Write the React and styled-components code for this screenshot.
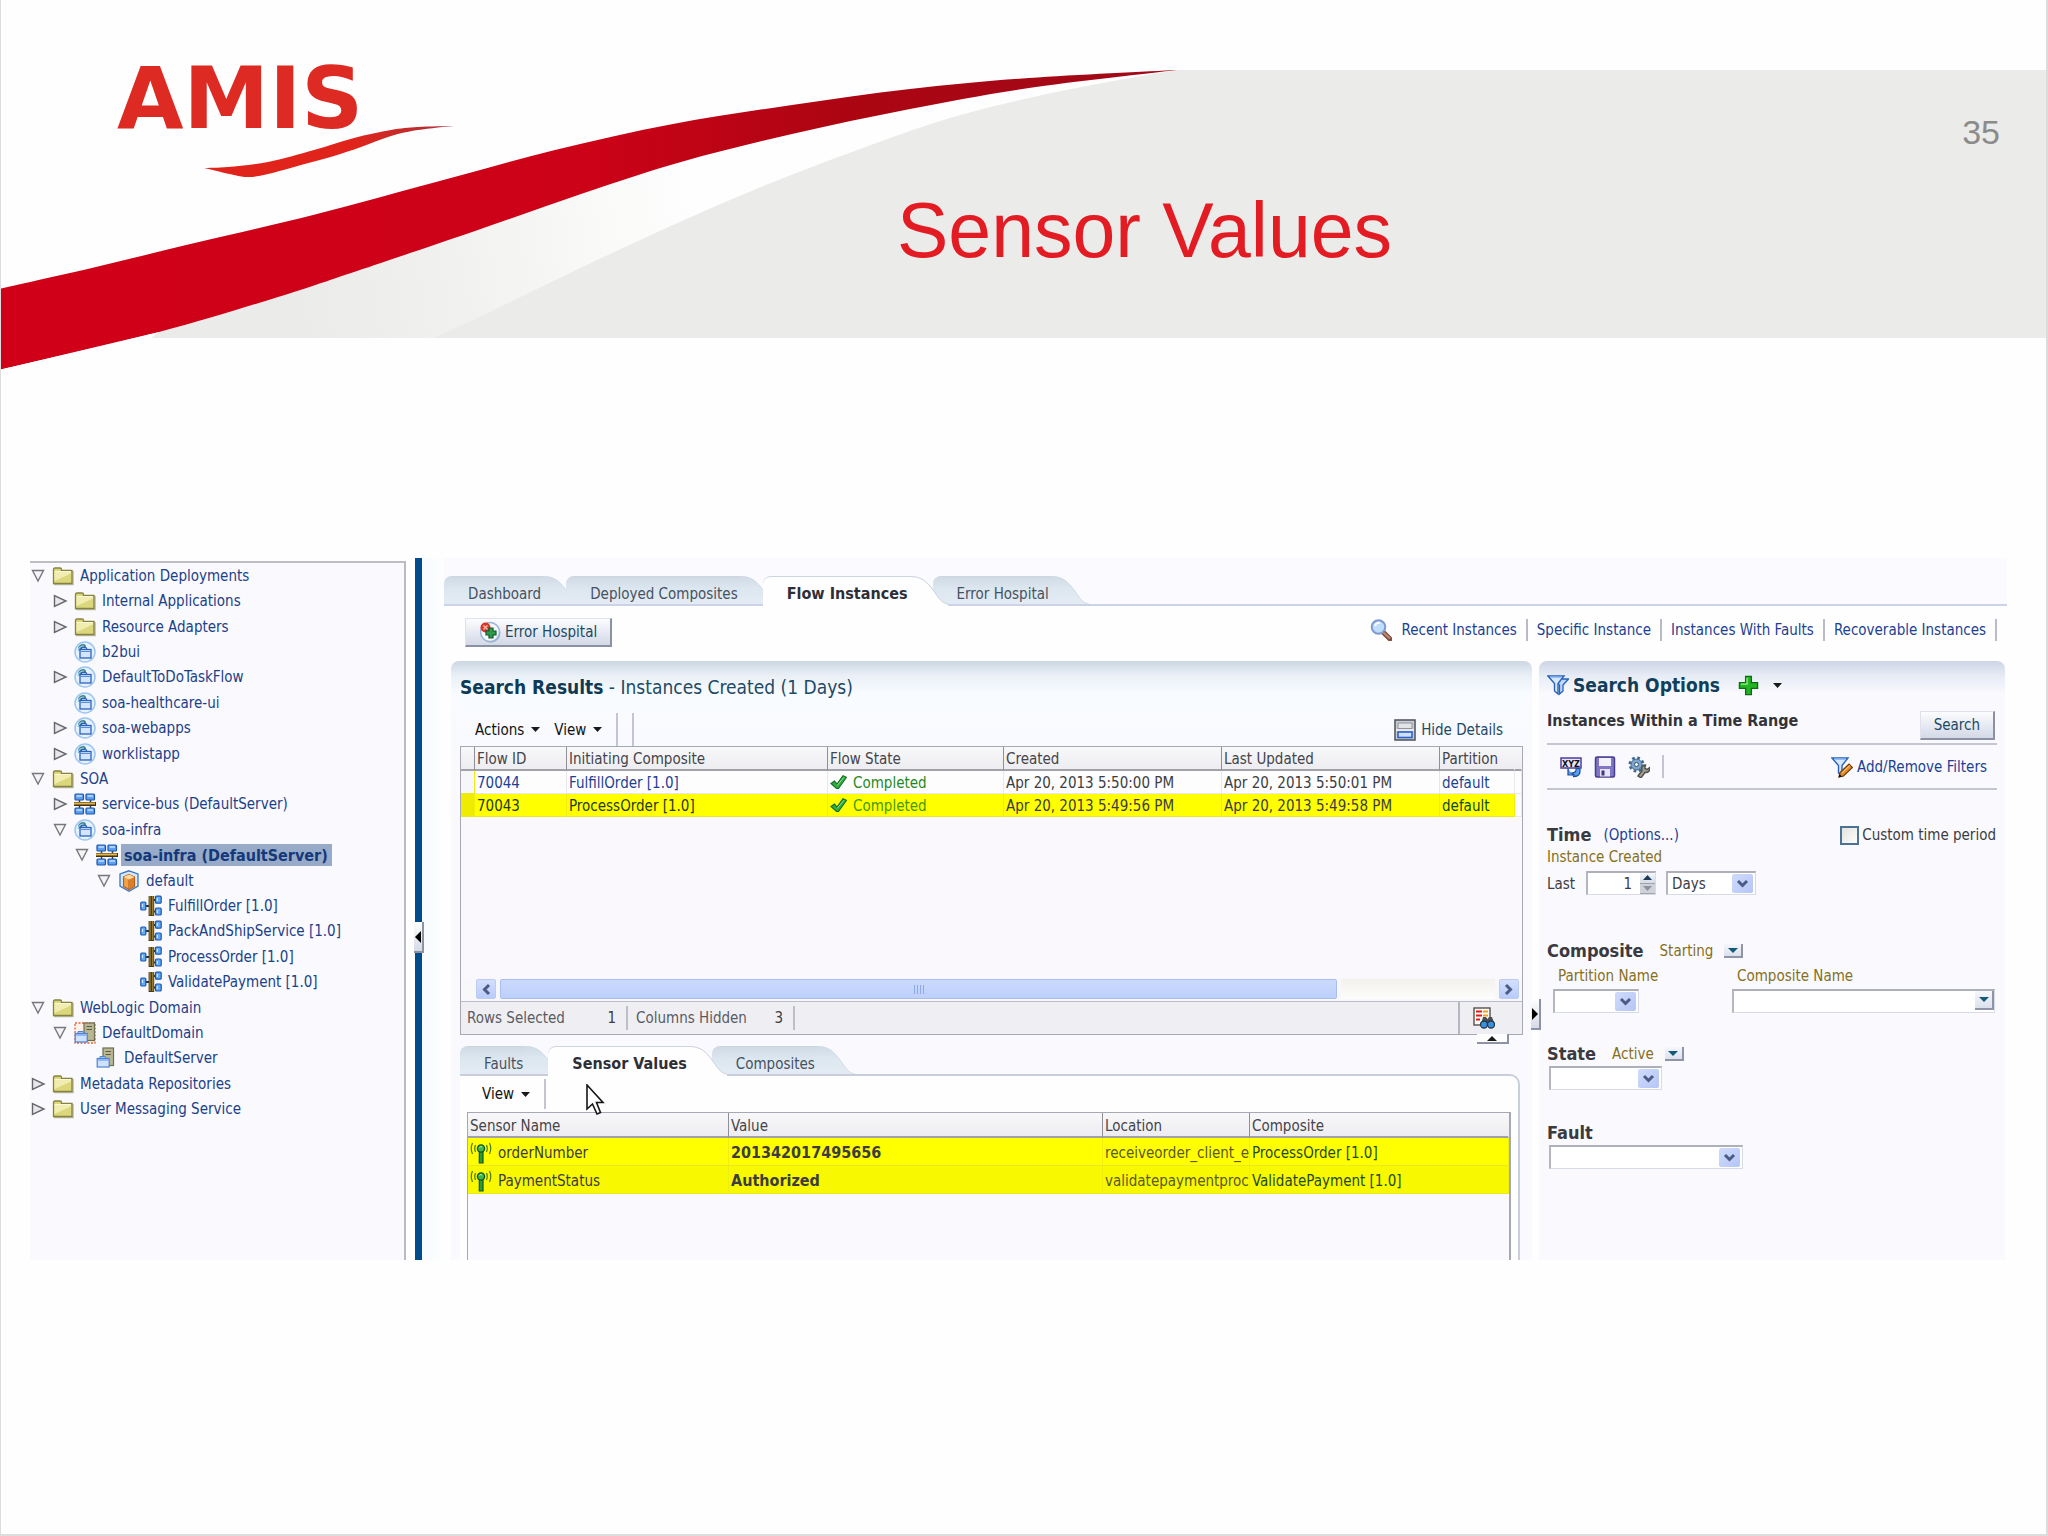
import React from "react";
import styled, { createGlobalStyle, css } from "styled-components";

/* ---------- tokens ---------- */

const ui = '"DejaVu Sans Condensed", "DejaVu Sans", "Noto Sans", sans-serif';
const c = {
  link: "#1c3f94",
  tree: "#1b4189",
  teal: "#123f5a",
  ink: "#3c3c42",
  label: "#85701c",
  line: "#c4c6d0",
  frame: "#a6a8b2",
  panel: "#f9f9fe",
  yellow: "#ffff00",
};

const GlobalStyle = createGlobalStyle`
  *, *::before, *::after { box-sizing: border-box; }
  body { margin: 0; background: #fefefe; }
  button, input, select { font: inherit; color: inherit; margin: 0; }
  a { text-decoration: none; }
`;

/* ---------- slide ---------- */

const Slide = styled.div`
  min-height: 100vh;
  display: flex;
  flex-direction: column;
  border: solid #dcdcdc;
  border-width: 0 2px 2px 1px;
  background: #fefefe;
  font: 15px/20px ${ui};
  color: ${c.ink};
`;

const Header = styled.header`
  position: relative;
  padding-top: 70px;
  height: 370px;
  overflow: hidden;
`;

const Band = styled.div`
  height: 268px;
  background: #ebebe9;
  display: flex;
  flex-direction: column;
  font-family: "Liberation Sans", Arial, sans-serif;
`;

const PageNumber = styled.div`
  padding: 40px 46px 0 0;
  text-align: right;
  font-size: 34px;
  line-height: 44px;
  color: #8b8b8b;
`;

const Title = styled.h1`
  position: relative;
  z-index: 1;
  margin: 32px 0 0;
  padding-left: 242px;
  text-align: center;
  font-size: 77px;
  font-weight: 400;
  line-height: 88px;
  color: #e31b23;
`;

const Art = styled.svg`
  position: absolute;
  left: 0;
  top: 0;
`;

const Console = styled.main`
  display: flex;
  margin: 188px 39px 0 29px;
`;

/* ---------- navigation tree ---------- */

const Sidebar = styled.nav`
  width: 376px;
  margin-top: 3px;
  border-top: 2px solid #bdbec4;
  border-right: 2px solid #b9bac2;
  background: ${c.panel};
`;

const Tree = styled.ul`
  height: 559px;
  margin: 0;
  padding: 0;
  list-style: none;
  display: grid;
  grid-auto-rows: 1fr;
`;

const TreeItem = styled.li`
  display: flex;
  align-items: center;
  padding-left: ${(p) => p.$level * 22}px;
  white-space: nowrap;
`;

const Twisty = styled.span`
  width: 22px;
  height: 20px;
  display: flex;
`;

const TreeLink = styled.a`
  display: flex;
  align-items: center;
  gap: 3px;
  color: ${c.tree};
`;

const TreeLabel = styled.span`
  padding: 1px 4px 0 3px;
  line-height: 21px;
  ${(p) =>
    p.$selected &&
    css`
      font-size: 16px;
      font-weight: 700;
      color: #14397b;
      background: #97abc9;
    `}
`;

const Splitter = styled.div`
  position: relative;
  width: 7px;
  margin-left: 9px;
  background: #004b8c;
`;

const Handle = styled.button`
  position: absolute;
  z-index: 2;
  display: flex;
  align-items: center;
  justify-content: center;
  padding: 0;
  border: solid #8d93a5;
  border-width: 0 2px 2px 0;
  background: linear-gradient(#ffffff, #d5dae6);
`;

const SplitHandle = styled(Handle)`
  left: -1px;
  top: 364px;
  width: 10px;
  height: 31px;
`;

const OptionsHandle = styled(Handle)`
  right: -9px;
  top: 338px;
  width: 10px;
  height: 31px;
`;

const DetailsHandle = styled(Handle)`
  right: 13px;
  top: 100%;
  width: 32px;
  height: 10px;
  background: #fdfdfe;
`;

/* ---------- tabs ---------- */

const Content = styled.section`
  flex: 1;
  min-width: 0;
  padding-left: 22px;
  background: linear-gradient(to right, #f6fbfe, #fefefe 24px);
`;

const TabStrip = styled.div`
  display: flex;
  height: ${(p) => (p.$main ? 48 : 28)}px;
  padding-top: ${(p) => (p.$main ? 18 : 0)}px;
  ${(p) =>
    p.$main &&
    css`
      background: #fafaff;
      border-bottom: 2px solid #ccd2e8;
    `}
`;

const TabButton = styled.button`
  position: relative;
  z-index: ${(p) => (p.$active ? 1 : 0)};
  display: flex;
  height: ${(p) => (p.$active ? 30 : 28)}px;
  padding: 0;
  border: 0;
  background: none;
  color: ${(p) => (p.$active ? "#2e2e36" : "#45525f")};
  font-weight: ${(p) => (p.$active ? 700 : 400)};
  font-size: ${(p) => (p.$active ? 16 : 15)}px;
  white-space: nowrap;
`;

const TabText = styled.span`
  height: 100%;
  padding: 7px 2px 0 24px;
  line-height: 20px;
  border-top: 1px solid #cdd5df;
  border-top-left-radius: 8px;
  background: ${(p) => (p.$active ? "#fefefe" : "linear-gradient(#d0dae5, #dce7f0 12px, #e4ebf4)")};
`;

const TabEdge = styled.svg`
  display: block;
  margin-right: -15px;
`;

function Tab({ active, children }) {
  return (
    <TabButton type="button" role="tab" aria-selected={!!active} $active={active}>
      <TabText $active={active}>{children}</TabText>
      <TabEdge width="38" height={active ? 30 : 28} aria-hidden="true">
        <defs>
          <linearGradient id="tabfill" gradientUnits="userSpaceOnUse" x1="0" y1="0" x2="0" y2="28">
            <stop offset="0" stopColor="#d0dae5" />
            <stop offset=".43" stopColor="#dce7f0" />
            <stop offset="1" stopColor="#e4ebf4" />
          </linearGradient>
        </defs>
        <path
          d="M0 0C12 0 17 6 23 14S31 27 38 28V30H0Z"
          fill={active ? "#fefefe" : "url(#tabfill)"}
        />
        <path d="M0 .5C12 .5 17 6 23 14S31 27 38 28" fill="none" stroke={active ? "#c9d0dd" : "#d3dbe5"} />
      </TabEdge>
    </TabButton>
  );
}

/* ---------- buttons, links ---------- */

const PushButton = styled.button`
  display: flex;
  align-items: center;
  justify-content: center;
  gap: 4px;
  height: 29px;
  padding: 0 13px;
  border: solid;
  border-width: 1px 2px 2px 1px;
  border-color: #dfe2ea #8b91a3 #8b91a3 #dfe2ea;
  background: linear-gradient(#fcfdfe, #dfe3ee 70%, #d3d9e6);
  color: #1c4a63;
  white-space: nowrap;
`;

const MenuButton = styled.button`
  display: flex;
  align-items: center;
  gap: 7px;
  padding: 0;
  border: 0;
  background: none;
  color: #111;
`;

const IconButton = styled.button`
  display: flex;
  padding: 0;
  border: 0;
  background: none;
`;

const TextLink = styled.a`
  display: flex;
  align-items: center;
  gap: ${(p) => p.$gap || 0}px;
  color: ${(p) => p.$color || c.link};
  white-space: nowrap;
`;

const Toolbar = styled.div`
  display: flex;
  justify-content: space-between;
  align-items: flex-start;
  height: 55px;
  padding: 12px 10px 0 21px;
`;

const QuickLinks = styled.nav`
  display: flex;
  align-items: center;
  padding-top: 1px;
`;

const QuickLink = styled(TextLink)`
  height: 22px;
  padding: 0 9px;
  border-right: 2px solid #b9bcc6;
`;

const Divider = styled.span`
  width: 2px;
  height: ${(p) => p.$h}px;
  background: #c3c5d2;
`;

/* ---------- results panel ---------- */

const Columns = styled.div`
  display: flex;
  gap: 7px;
  padding: 0 2px 0 7px;
`;

const Results = styled.section`
  position: relative;
  flex: 1;
  min-width: 0;
  padding: 0 9px;
  border-radius: 8px 8px 0 0;
  background: linear-gradient(#ccd7e4, #e8eff6 14px, #f8fbff 32px, ${c.panel} 100px);
`;

const ResultsTitle = styled.h2`
  margin: 0;
  font-size: 19px;
  font-weight: 400;
  line-height: 52px;
  color: #1d4a66;
  strong {
    color: #0e3a56;
  }
`;

const MenuBar = styled.div`
  display: flex;
  align-items: center;
  height: ${(p) => (p.$detail ? 36 : 33)}px;
  padding: 0 20px 0 15px;
  gap: 14px;
`;

const Push = styled.div`
  flex: 1;
`;

const Frame = styled.div`
  position: relative;
  border: 1px solid ${c.frame};
`;

const TableArea = styled.div`
  height: 231px;
  background: #faf8fd;
`;

const Grid = styled.table`
  width: 100%;
  table-layout: fixed;
  border-collapse: separate;
  border-spacing: 0;
`;

const Th = styled.th`
  height: ${(p) => p.$h || 24}px;
  padding: 2px 0 0 2px;
  text-align: left;
  font-weight: 400;
  white-space: nowrap;
  color: #44444a;
  background: linear-gradient(#f8f8fa, #ededf1);
  border-right: 1px solid ${(p) => (p.$last ? "transparent" : "#8f9097")};
  border-bottom: 2px solid #a1a2a9;
`;

const Td = styled.td`
  height: ${(p) => p.$h || 23}px;
  padding: 2px 0 0 2px;
  overflow: hidden;
  white-space: nowrap;
  color: ${(p) => p.$color || "inherit"};
  font-weight: ${(p) => (p.$bold ? 700 : 400)};
  font-size: ${(p) => (p.$bold ? 16 : 15)}px;
  background: ${(p) => (p.$bg ? p.$bg : "#fdfdfe")};
  border-right: 1px solid ${(p) => (p.$bg ? "#eeee10" : "#e8e8ec")};
  border-bottom: 1px solid ${(p) => (p.$bg ? "#e9e920" : "#e8e8ec")};
`;

const Inline = styled.span`
  display: flex;
  align-items: center;
  gap: ${(p) => p.$gap || 6}px;
`;

const ScrollRow = styled.div`
  display: grid;
  grid-template-columns: 20px 843fr 155fr 20px;
  gap: 4px;
  height: 24px;
  padding: 1px 3px 2px 15px;
  background: #f8f8fb;
  border-bottom: 1px solid #b9bccb;
`;

const ScrollTrack = styled.div`
  background: linear-gradient(#f2f1ee, #fdfdfb);
`;

const ScrollThumb = styled.div`
  display: flex;
  align-items: center;
  justify-content: center;
  border: 1px solid #a9bef0;
  border-radius: 2px;
  background: linear-gradient(#cbd9fd, #bdd0fb);
`;

const ScrollButton = styled.button`
  display: flex;
  align-items: center;
  justify-content: center;
  padding: 0;
  border: 1px solid #bccbf2;
  border-radius: 2px;
  background: linear-gradient(#d3dffd, #b9cbfa);
`;

const StatusBar = styled.dl`
  display: flex;
  align-items: center;
  height: 32px;
  margin: 0;
  padding-left: 6px;
  background: #efeff3;
  color: #5a5b62;
`;

const Stat = styled.div`
  display: flex;
  justify-content: space-between;
  width: ${(p) => p.$w}px;
  height: 24px;
  margin-right: 8px;
  padding: 2px 10px 0 0;
  border-right: 2px solid #bcbec8;
  dd {
    margin: 0;
    color: ${c.ink};
  }
`;

const StatusTool = styled.div`
  display: flex;
  align-items: center;
  width: 64px;
  height: 100%;
  padding-left: 13px;
  border-left: 2px solid #b4b6c1;
`;

/* ---------- details panel ---------- */

const Details = styled.div`
  margin-top: 11px;
`;

const DetailBody = styled.div`
  position: relative;
  margin-right: 3px;
  padding: 0 7px;
  border: solid #c9cedb;
  border-width: 2px 2px 0 0;
  border-top-right-radius: 10px;
  background: #fefefe;
`;

const DetailFrame = styled(Frame)`
  min-height: 148px;
  border-width: 1px 2px 0 1px;
  background: #faf9fe;
`;

const Pointer = styled.svg`
  position: absolute;
  left: 126px;
  top: 8px;
`;

/* ---------- search options ---------- */

const Options = styled.aside`
  width: 466px;
  padding: 8px 8px 0;
  border-radius: 8px 8px 0 0;
  background: linear-gradient(#ccd5e6, #e6ebf5 14px, ${c.panel} 32px);
`;

const OptionsHead = styled.div`
  display: flex;
  align-items: center;
  height: 32px;
  gap: 4px;
  h2 {
    margin: 0 14px 0 0;
    font-size: 19px;
    color: #0f3f5b;
  }
  ${MenuButton} {
    gap: 14px;
  }
`;

const Criteria = styled.div`
  display: flex;
  justify-content: space-between;
  align-items: flex-start;
  height: 44px;
  padding: 10px 2px 0 0;
  border-bottom: 2px solid ${c.line};
  h3 {
    margin: 0;
    font-size: 16px;
    line-height: 20px;
    color: #33333a;
  }
`;

const ToolRow = styled.div`
  display: flex;
  align-items: center;
  height: 45px;
  gap: 12px;
  padding: 0 10px 0 13px;
  border-bottom: 2px solid ${c.line};
`;

const Field = styled.section`
  margin-top: ${(p) => p.$top}px;
`;

const FieldHead = styled.div`
  display: flex;
  align-items: center;
  height: 22px;
  gap: ${(p) => p.$gap || 16}px;
  h3 {
    margin: 0;
    font-size: 18px;
    line-height: 22px;
    color: #3a3a40;
  }
`;

const Note = styled.div`
  padding-top: 1px;
  color: ${c.label};
`;

const Picked = styled.span`
  display: flex;
  align-items: center;
  gap: 11px;
  color: ${c.label};
`;

const CheckLabel = styled.label`
  display: flex;
  align-items: center;
  gap: 3px;
  margin-left: auto;
  padding-right: 1px;
  white-space: nowrap;
`;

const Check = styled.input`
  appearance: none;
  width: 19px;
  height: 19px;
  margin: 0;
  border: 2px solid #4b7396;
  background: linear-gradient(135deg, #e2e2de, #fdfdfb);
`;

const Inputs = styled.div`
  display: flex;
  margin-top: ${(p) => p.$top || 0}px;
  padding-left: ${(p) => p.$indent || 0}px;
`;

const LastLabel = styled.label`
  width: 39px;
  line-height: 26px;
`;

const Box = styled.span`
  display: grid;
  grid-template-columns: 1fr auto;
  width: ${(p) => p.$w}px;
  height: 24px;
  border: solid;
  border-width: 2px 1px 1px 2px;
  border-color: #adafb9 #d6dbe6 #d6dbe6 #b5b7c0;
  background: #fff;
`;

const NativeSelect = styled.select`
  grid-area: 1 / 1 / 2 / 3;
  appearance: none;
  width: 100%;
  height: 100%;
  padding: 1px 24px 0 4px;
  border: 0;
  background: transparent;
`;

const SelectArrow = styled.span`
  grid-area: 1 / 2 / 2 / 3;
  pointer-events: none;
  display: flex;
  align-items: center;
  justify-content: center;
  width: 21px;
  margin: 1px 2px 1px 0;
  border-radius: 2px;
  background: linear-gradient(135deg, #d0dbfb, #b5c5f6);
`;

const TextBox = styled.input`
  width: 100%;
  min-width: 0;
  padding: 1px 8px 0;
  border: 0;
  background: transparent;
  text-align: ${(p) => p.$align || "left"};
`;

const Spinner = styled.span`
  display: grid;
  grid-template-rows: 1fr 1fr;
  width: 15px;
`;

const SpinButton = styled.button`
  display: flex;
  align-items: center;
  justify-content: center;
  padding: 0;
  border: 0;
  border-bottom: 1px solid #9fa4b0;
  background: ${(p) => (p.disabled ? "#cfd2d9" : "linear-gradient(#f5f7fa, #d5dbe5)")};
`;

const DropButton = styled.button`
  display: flex;
  align-items: center;
  justify-content: center;
  width: 19px;
  height: ${(p) => p.$h || 14}px;
  padding: 0;
  border: solid #8f95a7;
  border-width: 0 2px 2px 0;
  background: linear-gradient(#f5f7fb, #dbe1ec);
`;

const FieldLabel = styled.label`
  display: block;
  width: ${(p) => p.$w}px;
  padding-left: 5px;
  color: ${c.label};
  white-space: nowrap;
`;

/* ---------- drawings ---------- */

const Svg = ({ s = 22, children }) => (
  <svg width={s} height={s} viewBox="0 0 22 22" fill="none" aria-hidden="true">
    {children}
  </svg>
);

const Caret = ({ w = 9, up, left, right, fill = "#1a1a1a" }) => {
  const d = up ? "M0 5L5 0L10 5Z" : "M0 0H10L5 5Z";
  if (left || right) {
    return (
      <svg width="6" height="12" viewBox="0 0 6 12" aria-hidden="true">
        <path d={left ? "M6 0V12L0 6Z" : "M0 0V12L6 6Z"} fill="#000" />
      </svg>
    );
  }
  return (
    <svg width={w} height={Math.round(w / 2)} viewBox="0 0 10 5" preserveAspectRatio="none" aria-hidden="true">
      <path d={d} fill={fill} />
    </svg>
  );
};

const Chevron = ({ turn = 0 }) => (
  <svg width="13" height="13" viewBox="0 0 13 13" aria-hidden="true">
    <path d="M2 4L6.500 8.500L11 4" transform={`rotate(${turn} 6.5 6.5)`} fill="none" stroke="#4a5b84" strokeWidth="3" />
  </svg>
);

const Twist = ({ open }) => (
  <svg width="16" height="20" viewBox="0 0 16 20" aria-hidden="true">
    {open ? (
      <path d="M2.500 4.500H13.500L8 15Z" fill="#f4f4f4" stroke="#77777c" strokeWidth="1.400" />
    ) : (
      <path d="M2.500 4.500V15.500L14 10Z" fill="#e8e8ea" stroke="#66666b" strokeWidth="1.400" />
    )}
  </svg>
);

const Folder = () => (
  <Svg>
    <path d="M2 19.500H21V6" stroke="#8f8f70" strokeWidth="1.500" opacity=".6" />
    <path d="M1.500 4.500Q1.500 3 3 3H8Q9.500 3 9.500 4.500V5.500H20V18.500H1.500Z" fill="#dcd77c" stroke="#86823f" strokeWidth="1.300" />
    <path d="M2.500 7H19V8.500L2.500 16Z" fill="#f1edb0" />
    <path d="M2.500 6.500H19" stroke="#fbf9d4" />
  </Svg>
);

const AppIcon = () => (
  <Svg>
    <circle cx="11" cy="11" r="10" fill="#e6f2fe" stroke="#9cc6f2" strokeWidth="1.500" />
    <path d="M4 10Q3 4 9 3Q12 3 12 6" fill="#3f7f86" />
    <path d="M4 10Q5 5 10 5" stroke="#9fd0ee" strokeWidth="1.200" />
    <path d="M7.500 8.500V6.500H12L13 8.500" fill="#bcd6fb" stroke="#2d62b8" strokeWidth="1.200" />
    <rect x="6" y="8.500" width="11" height="8.500" fill="#d3e5ff" stroke="#2d62b8" strokeWidth="1.300" />
    <path d="M6.500 10.500H16.500" stroke="#5b8fe0" />
  </Svg>
);

const BusIcon = () => (
  <Svg>
    <path d="M5.500 6V17M16.500 6V17" stroke="#3c3c3c" strokeWidth="1.500" />
    {[[1, 1], [12, 1], [1, 15], [12, 15]].map(([x, y]) => (
      <rect key={`${x}${y}`} x={x} y={y} width="8.500" height="6" rx="1" fill="#5d9ff0" stroke="#1c56ad" strokeWidth="1.200" />
    ))}
    <path d="M2.500 3H8M13.500 3H19M2.500 17H8M13.500 17H19" stroke="#c5e0ff" strokeWidth="1.500" />
    <path d="M0 11H22" stroke="#3f3312" strokeWidth="4" />
    <path d="M0 10.500H21" stroke="#e5b64a" strokeWidth="2" />
  </Svg>
);

const CubeIcon = () => (
  <Svg>
    <path d="M11 .8L20 4V16L11 21.200L2 16V4Z" fill="#d8e9fc" stroke="#3a74c4" strokeWidth="1.300" />
    <path d="M11 4.500L16.500 7V16.500L11 19.500L5.500 16.500V7Z" fill="#f2a04a" stroke="#b5611a" strokeWidth="1.200" />
    <path d="M5.500 7L11 9.500L16.500 7L11 4.500Z" fill="#ffd9a4" />
    <path d="M11 9.500V19" stroke="#b5611a" />
    <path d="M11.500 9.500L16 7.500V16L11.500 19Z" fill="#dd7d28" />
  </Svg>
);

const CompositeIcon = () => (
  <Svg>
    <path d="M5 11H9M13 5H16M13 16.500H16" stroke="#2d2d2d" strokeWidth="2" />
    <rect x=".8" y="7" width="5" height="8" rx="1" fill="#63aaf2" stroke="#1c56ad" strokeWidth="1.200" />
    <path d="M10 1V21M12.800 1V21" stroke="#4b3c14" strokeWidth="2.800" />
    <path d="M10 1V20M12.800 1V20" stroke="#b99741" strokeWidth="1" />
    <rect x="15.500" y="1.200" width="5.700" height="7" rx="1" fill="#63aaf2" stroke="#1c56ad" strokeWidth="1.200" />
    <rect x="15.500" y="13" width="5.700" height="7" rx="1" fill="#63aaf2" stroke="#1c56ad" strokeWidth="1.200" />
    <path d="M2.500 9V12M17.300 3V6M17.300 15V18" stroke="#d2e8ff" strokeWidth="1.200" />
  </Svg>
);

const ServerIcon = ({ domain }) => (
  <Svg>
    {domain && <rect x="1" y="1" width="20" height="20" fill="#fdf1ea" stroke="#e2663a" strokeWidth="1.300" strokeDasharray="2 1.500" />}
    <rect x={domain ? 10 : 7} y="1" width="10.500" height="17.500" fill="#b9b694" stroke="#6f6d50" strokeWidth="1.200" />
    <path d={domain ? "M12.500 4.500H18M12.500 7.500H18" : "M9.500 4.500H15M9.500 7.500H15"} stroke="#5f5d43" strokeWidth="1.200" />
    <path d="M4 11.500V9.500H9L10 11.500" fill="#a9cbf8" stroke="#4c83d2" />
    <rect x="1.200" y="11.500" width="12" height="8.500" fill="#cfe2fd" stroke="#4c83d2" strokeWidth="1.200" />
    <path d="M2 13H12.500" stroke="#7eabed" strokeWidth="1.500" />
  </Svg>
);

const HospitalIcon = () => (
  <Svg>
    <circle cx="12" cy="12" r="9.500" fill="#9fb0c8" />
    <circle cx="11" cy="11" r="9.500" fill="#f4f8fd" stroke="#9bb3d8" strokeWidth="1.500" />
    <circle cx="6.500" cy="6.500" r="5" fill="#d8392d" />
    <path d="M4.500 4.500L8.500 8.500M8.500 4.500L4.500 8.500" stroke="#f6b9a8" strokeWidth="1.400" />
    <path d="M10 7H14V10H17V14H14V17H10V14H7V10H10Z" fill="#2f9c4c" stroke="#11572a" strokeWidth="1.200" />
  </Svg>
);

const SearchIcon = () => (
  <Svg>
    <path d="M14 14L20 20" stroke="#7d5040" strokeWidth="5" strokeLinecap="round" />
    <path d="M14 14L19.500 19" stroke="#bf8b74" strokeWidth="2" strokeLinecap="round" />
    <circle cx="8.500" cy="8" r="6.800" fill="#bfdcfa" stroke="#7e9ad0" strokeWidth="2" />
    <path d="M5 7Q6 3.500 10 4" stroke="#fff" strokeWidth="1.800" />
  </Svg>
);

const HideIcon = () => (
  <Svg>
    <rect x="1" y="1" width="20" height="20" fill="#c9ccd2" stroke="#565a63" strokeWidth="1.600" />
    <rect x="4" y="4" width="14" height="5.500" fill="#e3e4e8" stroke="#8f939b" />
    <path d="M2 11H20" stroke="#f4f4f4" strokeWidth="1.500" />
    <rect x="4" y="13" width="14" height="5.500" fill="#cfe1ff" stroke="#2b62c9" strokeWidth="1.600" />
  </Svg>
);

const CheckMark = () => (
  <svg width="17" height="17" viewBox="0 0 17 17" aria-hidden="true">
    <path d="M1 8.500L4.500 6L7 9L13 .8L16.500 2.300L8.500 13.500H6.500Z" fill="#2fae3f" stroke="#166b24" strokeWidth="1.100" />
    <path d="M7 10.500L14 2.300" stroke="#86e38d" strokeWidth="1" />
  </svg>
);

const FindIcon = () => (
  <Svg>
    <rect x="1" y="1" width="16" height="17" fill="#fdfdf6" stroke="#56504c" strokeWidth="1.400" />
    <path d="M3 4.500H9M3 8.500H9M3 12.500H7" stroke="#e01b1b" strokeWidth="2" />
    <path d="M10 4.500H15M10 8.500H15" stroke="#f0a022" strokeWidth="2" />
    <path d="M8 17L10 10H13L14.500 12L16 10H19L21.500 17Z" fill="#4a4f55" />
    <circle cx="11" cy="17.500" r="3.500" fill="#3d8fe0" stroke="#26394d" strokeWidth="1.300" />
    <circle cx="18" cy="17.500" r="3.500" fill="#3d8fe0" stroke="#26394d" strokeWidth="1.300" />
  </Svg>
);

const SensorIcon = () => (
  <Svg>
    <path d="M5.500 3Q4 6.500 5.500 10M2.500 1Q0 6.500 2.500 12M16.500 3Q18 6.500 16.500 10M19.500 1Q22 6.500 19.500 12" stroke="#4c7a10" strokeWidth="1.200" />
    <path d="M9.300 9V21H13V9" fill="#2b9c3a" stroke="#14551d" strokeWidth="1.200" />
    <circle cx="11" cy="6.500" r="3.600" fill="#3fb64c" stroke="#14551d" strokeWidth="1.300" />
    <path d="M9.500 5.500Q10.500 4 12 5" stroke="#c8f5bd" />
  </Svg>
);

const FunnelIcon = ({ pencil }) => (
  <Svg>
    {!pencil && <path d="M6 5H21.500L16 11V17L12.500 20V11Z" fill="#bcd8fa" stroke="#2b62b8" strokeWidth="1.300" />}
    <path d="M1 2H17L11 9.500V20L7.500 17V9.500Z" fill="#d5e8fd" stroke="#2b62b8" strokeWidth="1.400" />
    <path d="M3 3H15" stroke="#7fb0ee" strokeWidth="1.500" />
    {pencil && (
      <>
        <path d="M8 21L9 16.500L18 8L21.500 11.500L12.500 20Z" fill="#e58a24" stroke="#6d3c0c" strokeWidth="1.200" />
        <path d="M11 17L19 9.500" stroke="#ffd08a" />
        <path d="M7.500 21.500L8.500 18L11 20.500Z" fill="#111" />
      </>
    )}
  </Svg>
);

const PlusIcon = () => (
  <Svg s={21}>
    <path d="M8 1.500H14V8H20.500V14H14V20.500H8V14H1.500V8H8Z" fill="#22b422" stroke="#0c6d10" strokeWidth="1.400" />
    <path d="M9.500 3V9.500H3" stroke="#98ee8a" strokeWidth="1.300" />
  </Svg>
);

const ResetIcon = () => (
  <Svg>
    <rect x="1" y="2" width="20" height="10" fill="#e9e6fb" stroke="#4b3fa0" strokeWidth="1.500" />
    <text x="11" y="10.500" textAnchor="middle" fontFamily={ui} fontSize="9" fontWeight="700" fill="#111">
      XYZ
    </text>
    <path d="M8 12V19H14L11.500 17Q17 17 16 12L20 13Q21 21 13 20.500" fill="#58a0f0" stroke="#1b4c9c" strokeWidth="1.200" />
  </Svg>
);

const SaveIcon = () => (
  <Svg>
    <rect x="1.500" y="1" width="19" height="20" rx="1.500" fill="#7f76c6" stroke="#473d8e" strokeWidth="1.500" />
    <rect x="5" y="2" width="12" height="8" fill="#f2f1fb" />
    <rect x="6" y="13" width="10" height="7.500" fill="#e5e3f4" />
    <rect x="7.500" y="14.500" width="3" height="5" fill="#40377f" />
  </Svg>
);

const GearIcon = () => (
  <Svg>
    <circle cx="8.500" cy="8.500" r="6.500" stroke="#44698c" strokeWidth="3" strokeDasharray="2.600 2.500" />
    <circle cx="8.500" cy="8.500" r="5.500" fill="#7ea6cc" stroke="#44698c" />
    <circle cx="8.500" cy="8.500" r="2" fill="#f4f8fc" stroke="#35536f" />
    <path d="M10 20L14 14.500Q12.500 9.500 17.500 9L16.800 12.200L19 13.500L21.800 11.500Q22 17 17 16.500L13 21.800Z" fill="#9a9c90" stroke="#4d4f48" strokeWidth="1.400" />
  </Svg>
);

/* Catmull-Rom spline through the points, as cubic segments */
const curve = (pts) =>
  pts
    .slice(0, -1)
    .map((p, i) => {
      const a = pts[i - 1] || p;
      const q = pts[i + 1];
      const b = pts[i + 2] || q;
      return `C${p[0] + (q[0] - a[0]) / 6} ${p[1] + (q[1] - a[1]) / 6} ${q[0] - (b[0] - p[0]) / 6} ${q[1] - (b[1] - p[1]) / 6} ${q[0]} ${q[1]}`;
    })
    .join("");

const ribbonTop = [[-2, 289], [95, 267], [198, 242], [316, 214], [435, 182], [554, 150], [672, 124], [791, 105], [909, 89], [1028, 78], [1176, 70]];
const ribbonBottom = [[1176, 70], [1028, 88], [909, 109], [791, 134], [680, 162], [580, 194], [474, 231], [356, 271], [277, 297], [158, 332], [-2, 370]];
const arc = [[1176, 70], [1107, 82], [1028, 98], [949, 118], [870, 145], [770, 183], [672, 225], [569, 273], [474, 319], [430, 339]];
const markTop = [[203, 168], [227, 167], [267, 162], [313, 150], [353, 138], [390, 130], [417, 127], [453, 126]];
const markBottom = [[453, 126], [417, 130], [390, 136], [360, 147], [333, 156], [300, 165], [267, 174], [248, 177], [233, 175], [203, 168]];

function SlideArt() {
  return (
    <Art width="1240" height="372" role="img" aria-label="AMIS">
      <defs>
        <linearGradient id="ribbon" gradientUnits="userSpaceOnUse" x1="0" y1="0" x2="1176" y2="0">
          <stop offset="0" stopColor="#d00018" />
          <stop offset=".5" stopColor="#cc0218" />
          <stop offset=".72" stopColor="#ac0512" />
          <stop offset="1" stopColor="#a00a18" />
        </linearGradient>
        <linearGradient id="sheen" gradientUnits="userSpaceOnUse" x1="300" y1="320" x2="700" y2="250">
          <stop offset="0" stopColor="#ebebe9" />
          <stop offset=".4" stopColor="#f1f1f0" />
          <stop offset=".75" stopColor="#f9f9f8" />
          <stop offset="1" stopColor="#fefefe" />
        </linearGradient>
        <linearGradient id="mark" x1="0" y1="0" x2="1" y2="0">
          <stop offset="0" stopColor="#e0241c" />
          <stop offset=".6" stopColor="#e0241c" />
          <stop offset="1" stopColor="#a8333a" />
        </linearGradient>
      </defs>
      <path d={`M1176 70${curve(arc)}V338H0V69H1176Z`} fill="url(#sheen)" />
      <path d={`M-2 289${curve(ribbonTop)}V60H-2Z`} fill="#fefefe" />
      <path d="M0 338H430V342H0Z" fill="#fefefe" />
      <path d={`M-2 289${curve(ribbonTop)}${curve(ribbonBottom)}Z`} fill="url(#ribbon)" />
      <path d="M-2 370L158 332L150 338L0 374Z" fill="#fefefe" />
      <text x="116" y="128" fontFamily='"DejaVu Sans", sans-serif' fontSize="86" fontWeight="700" fill="#dd2a22">
        AMIS
      </text>
      <path d={`M203 168${curve(markTop)}${curve(markBottom)}Z`} fill="url(#mark)" />
    </Art>
  );
}

/* ---------- data ---------- */

const tree = [
  [0, "open", Folder, "Application Deployments"],
  [1, "closed", Folder, "Internal Applications"],
  [1, "closed", Folder, "Resource Adapters"],
  [1, "", AppIcon, "b2bui"],
  [1, "closed", AppIcon, "DefaultToDoTaskFlow"],
  [1, "", AppIcon, "soa-healthcare-ui"],
  [1, "closed", AppIcon, "soa-webapps"],
  [1, "closed", AppIcon, "worklistapp"],
  [0, "open", Folder, "SOA"],
  [1, "closed", BusIcon, "service-bus (DefaultServer)"],
  [1, "open", AppIcon, "soa-infra"],
  [2, "open", BusIcon, "soa-infra (DefaultServer)", true],
  [3, "open", CubeIcon, "default"],
  [4, "", CompositeIcon, "FulfillOrder [1.0]"],
  [4, "", CompositeIcon, "PackAndShipService [1.0]"],
  [4, "", CompositeIcon, "ProcessOrder [1.0]"],
  [4, "", CompositeIcon, "ValidatePayment [1.0]"],
  [0, "open", Folder, "WebLogic Domain"],
  [1, "open", () => <ServerIcon domain />, "DefaultDomain"],
  [2, "", ServerIcon, "DefaultServer"],
  [0, "closed", Folder, "Metadata Repositories"],
  [0, "closed", Folder, "User Messaging Service"],
];

const flows = [
  ["70044", "FulfillOrder [1.0]", "Apr 20, 2013 5:50:00 PM", "Apr 20, 2013 5:50:01 PM"],
  ["70043", "ProcessOrder [1.0]", "Apr 20, 2013 5:49:56 PM", "Apr 20, 2013 5:49:58 PM"],
];

const sensors = [
  ["orderNumber", "201342017495656", "receiveorder_client_e", "ProcessOrder [1.0]"],
  ["PaymentStatus", "Authorized", "validatepaymentproc", "ValidatePayment [1.0]"],
];

/* ---------- parts ---------- */

const Select = ({ id, label, w, children }) => (
  <Box $w={w}>
    <NativeSelect id={id} aria-label={label}>
      {children || <option> </option>}
    </NativeSelect>
    <SelectArrow>
      <Chevron />
    </SelectArrow>
  </Box>
);

function NavTree() {
  return (
    <Sidebar aria-label="Targets">
      <Tree>
        {tree.map(([level, state, Icon, label, selected]) => (
          <TreeItem key={label + level} $level={level}>
            <Twisty>{state && <Twist open={state === "open"} />}</Twisty>
            <TreeLink href="#">
              <Icon />
              <TreeLabel $selected={selected}>{label}</TreeLabel>
            </TreeLink>
          </TreeItem>
        ))}
      </Tree>
    </Sidebar>
  );
}

function FlowTable() {
  return (
    <Grid>
      <colgroup>
        <col width="14" />
        <col width="92" />
        <col width="261" />
        <col width="176" />
        <col width="218" />
        <col width="218" />
        <col />
        <col width="7" />
      </colgroup>
      <thead>
        <tr>
          <Th />
          <Th>Flow ID</Th>
          <Th>Initiating Composite</Th>
          <Th>Flow State</Th>
          <Th>Created</Th>
          <Th>Last Updated</Th>
          <Th $last>Partition</Th>
          <Th $last />
        </tr>
      </thead>
      <tbody>
        {flows.map(([id, name, created, updated], i) => {
          const bg = i ? c.yellow : "";
          const link = i ? "#1f3a1c" : c.link;
          return (
            <tr key={id}>
              <Td $bg={i ? "#f0ec00" : "#f7f6fa"} />
              <Td $bg={bg} $color={link}>{id}</Td>
              <Td $bg={bg} $color={link}>{name}</Td>
              <Td $bg={bg} $color={i ? "#3f9a00" : "#1d8a26"}>
                <Inline>
                  <CheckMark />
                  Completed
                </Inline>
              </Td>
              <Td $bg={bg}>{created}</Td>
              <Td $bg={bg}>{updated}</Td>
              <Td $bg={bg} $color={i ? "#0d4a2a" : c.link}>default</Td>
              <Td />
            </tr>
          );
        })}
      </tbody>
    </Grid>
  );
}

function SensorTable() {
  return (
    <Grid>
      <colgroup>
        <col width="261" />
        <col width="374" />
        <col width="147" />
        <col />
      </colgroup>
      <thead>
        <tr>
          <Th $h={25}>Sensor Name</Th>
          <Th>Value</Th>
          <Th>Location</Th>
          <Th $last>Composite</Th>
        </tr>
      </thead>
      <tbody>
        {sensors.map(([name, value, place, composite], i) => {
          const bg = i ? "#f8f800" : c.yellow;
          return (
            <tr key={name}>
              <Td $h={28} $bg={bg}>
                <Inline>
                  <SensorIcon />
                  {name}
                </Inline>
              </Td>
              <Td $bg={bg} $bold>{value}</Td>
              <Td $bg={bg} $color="#5a5a20">{place}</Td>
              <Td $bg={bg} $color="#1f4a1c">{composite}</Td>
            </tr>
          );
        })}
      </tbody>
    </Grid>
  );
}

function SearchResults() {
  return (
    <Results>
      <ResultsTitle>
        <strong>Search Results</strong> - Instances Created (1 Days)
      </ResultsTitle>
      <MenuBar>
        <MenuButton type="button">Actions <Caret /></MenuButton>
        <MenuButton type="button">View <Caret /></MenuButton>
        <Divider $h={33} />
        <Divider $h={33} />
        <Push />
        <TextLink href="#" $gap={5} $color="#1d4a66">
          <HideIcon />
          Hide Details
        </TextLink>
      </MenuBar>
      <Frame>
        <TableArea>
          <FlowTable />
        </TableArea>
        <ScrollRow>
          <ScrollButton type="button" aria-label="Scroll left"><Chevron turn={90} /></ScrollButton>
          <ScrollThumb>
            <svg width="12" height="9" aria-hidden="true">
              <path d="M1.500 0V9M4.500 0V9M7.500 0V9M10.500 0V9" stroke="#8fa8e6" />
            </svg>
          </ScrollThumb>
          <ScrollTrack />
          <ScrollButton type="button" aria-label="Scroll right"><Chevron turn={-90} /></ScrollButton>
        </ScrollRow>
        <StatusBar>
          <Stat $w={161}>
            <dt>Rows Selected</dt>
            <dd>1</dd>
          </Stat>
          <Stat $w={159}>
            <dt>Columns Hidden</dt>
            <dd>3</dd>
          </Stat>
          <Push />
          <StatusTool>
            <IconButton type="button" aria-label="Find columns"><FindIcon /></IconButton>
          </StatusTool>
        </StatusBar>
        <DetailsHandle type="button" aria-label="Collapse details">
          <Caret up w={10} />
        </DetailsHandle>
      </Frame>
      <Details>
        <TabStrip role="tablist">
          <Tab>Faults</Tab>
          <Tab active>Sensor Values</Tab>
          <Tab>Composites</Tab>
        </TabStrip>
        <DetailBody>
          <MenuBar $detail>
            <MenuButton type="button">View <Caret /></MenuButton>
            <Divider $h={30} />
          </MenuBar>
          <DetailFrame>
            <SensorTable />
          </DetailFrame>
          <Pointer width="20" height="32" viewBox="0 0 20 32" aria-hidden="true">
            <path d="M1 1V25L6.500 20L11 30L14.500 28.500L10.500 18.500H17Z" fill="#fff" stroke="#16161a" strokeWidth="1.600" />
          </Pointer>
        </DetailBody>
      </Details>
      <OptionsHandle type="button" aria-label="Collapse search options">
        <Caret right />
      </OptionsHandle>
    </Results>
  );
}

function SearchOptions() {
  return (
    <Options>
      <OptionsHead>
        <FunnelIcon />
        <h2>Search Options</h2>
        <MenuButton type="button" aria-label="Add search">
          <PlusIcon />
          <Caret />
        </MenuButton>
      </OptionsHead>
      <Criteria>
        <h3>Instances Within a Time Range</h3>
        <PushButton type="button">Search</PushButton>
      </Criteria>
      <ToolRow>
        <IconButton type="button" aria-label="Reset"><ResetIcon /></IconButton>
        <IconButton type="button" aria-label="Save"><SaveIcon /></IconButton>
        <IconButton type="button" aria-label="Settings"><GearIcon /></IconButton>
        <Divider $h={23} />
        <Push />
        <TextLink href="#" $gap={4}>
          <FunnelIcon pencil />
          Add/Remove Filters
        </TextLink>
      </ToolRow>
      <Field $top={34}>
        <FieldHead $gap={12}>
          <h3>Time</h3>
          <TextLink href="#">(Options...)</TextLink>
          <CheckLabel>
            <Check type="checkbox" />
            Custom time period
          </CheckLabel>
        </FieldHead>
        <Note>Instance Created</Note>
        <Inputs $top={4}>
          <LastLabel htmlFor="last">Last</LastLabel>
          <Box $w={70}>
            <TextBox id="last" defaultValue="1" $align="right" />
            <Spinner>
              <SpinButton type="button" aria-label="Increase"><Caret up fill="#1d3c5c" /></SpinButton>
              <SpinButton type="button" aria-label="Decrease" disabled><Caret fill="#8c929e" /></SpinButton>
            </Spinner>
          </Box>
          <Inputs $indent={10}>
            <Select label="Time unit" w={90}>
              <option>Days</option>
            </Select>
          </Inputs>
        </Inputs>
      </Field>
      <Field $top={43}>
        <FieldHead>
          <h3>Composite</h3>
          <Picked>
            Starting
            <DropButton type="button" aria-label="Composite role"><Caret w={10} fill="#135a78" /></DropButton>
          </Picked>
        </FieldHead>
        <Inputs $top={4} $indent={6}>
          <FieldLabel htmlFor="partition" $w={179}>Partition Name</FieldLabel>
          <FieldLabel htmlFor="composite">Composite Name</FieldLabel>
        </Inputs>
        <Inputs $top={3} $indent={6}>
          <Select id="partition" w={86} />
          <Inputs $indent={93}>
            <Box $w={263}>
              <TextBox id="composite" />
              <DropButton type="button" aria-label="Choose composite" $h={19}><Caret w={10} fill="#135a78" /></DropButton>
            </Box>
          </Inputs>
        </Inputs>
      </Field>
      <Field $top={30}>
        <FieldHead>
          <h3>State</h3>
          <Picked>
            Active
            <DropButton type="button" aria-label="State group"><Caret w={10} fill="#135a78" /></DropButton>
          </Picked>
        </FieldHead>
        <Inputs $top={1} $indent={2}>
          <Select label="State" w={113} />
        </Inputs>
      </Field>
      <Field $top={32}>
        <FieldHead>
          <h3>Fault</h3>
        </FieldHead>
        <Inputs $top={1} $indent={2}>
          <Select label="Fault" w={194} />
        </Inputs>
      </Field>
    </Options>
  );
}

export default function App() {
  return (
    <Slide>
      <GlobalStyle />
      <Header>
        <SlideArt />
        <Band>
          <PageNumber>35</PageNumber>
          <Title>Sensor Values</Title>
        </Band>
      </Header>
      <Console>
        <NavTree />
        <Splitter>
          <SplitHandle type="button" aria-label="Collapse navigation">
            <Caret left />
          </SplitHandle>
        </Splitter>
        <Content>
          <TabStrip role="tablist" $main>
            <Tab>Dashboard</Tab>
            <Tab>Deployed Composites</Tab>
            <Tab active>Flow Instances</Tab>
            <Tab>Error Hospital</Tab>
          </TabStrip>
          <Toolbar>
            <PushButton type="button">
              <HospitalIcon />
              Error Hospital
            </PushButton>
            <QuickLinks aria-label="Quick searches">
              <SearchIcon />
              <QuickLink href="#">Recent Instances</QuickLink>
              <QuickLink href="#">Specific Instance</QuickLink>
              <QuickLink href="#">Instances With Faults</QuickLink>
              <QuickLink href="#">Recoverable Instances</QuickLink>
            </QuickLinks>
          </Toolbar>
          <Columns>
            <SearchResults />
            <SearchOptions />
          </Columns>
        </Content>
      </Console>
    </Slide>
  );
}
